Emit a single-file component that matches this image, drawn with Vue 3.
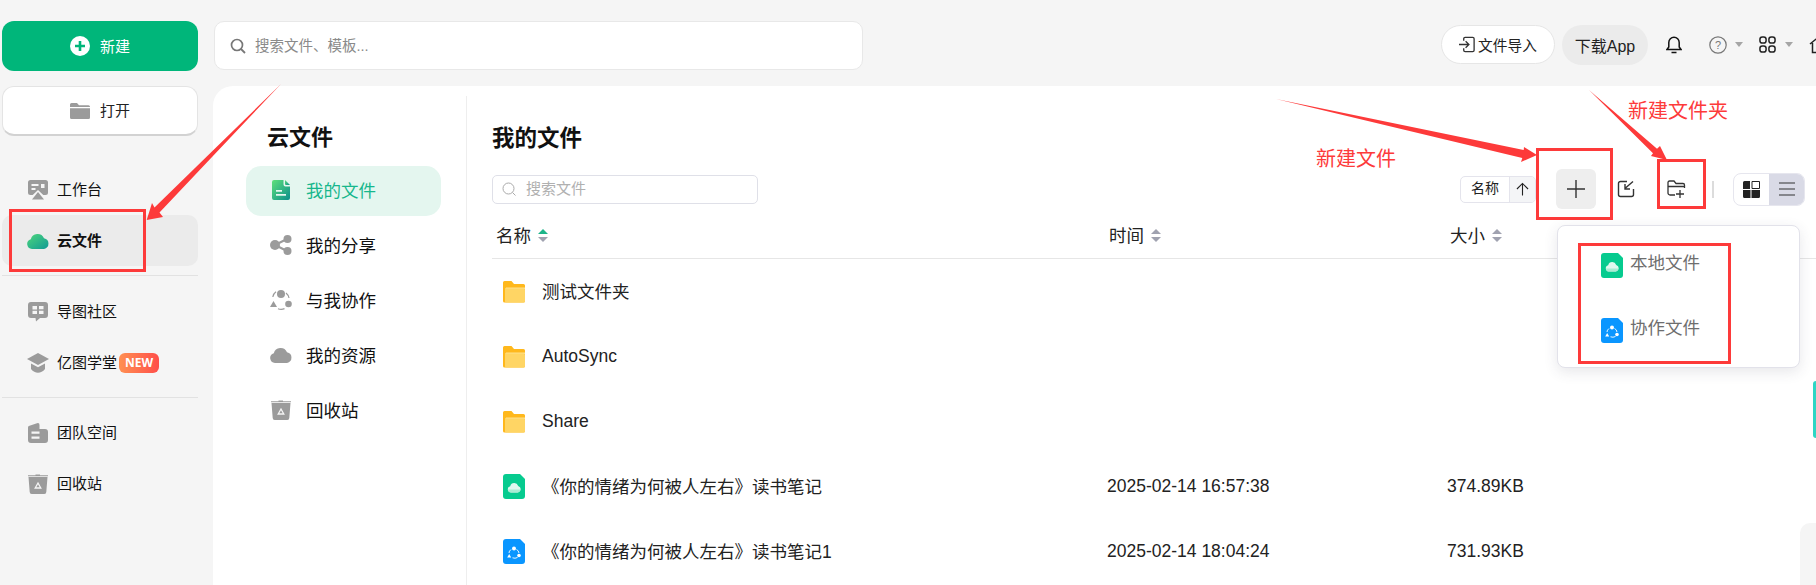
<script setup>
const navA = [{ icon: 'i-work', text: '工作台' }, { icon: 'i-cloud', text: '云文件', active: true }]
const navB = [{ icon: 'i-community', text: '导图社区' }, { icon: 'i-school', text: '亿图学堂', badge: 'NEW' }]
const navC = [{ icon: 'i-team', text: '团队空间' }, { icon: 'i-trash', text: '回收站' }]
const subNav = [
  { icon: 'i-mydoc', text: '我的文件', active: true },
  { icon: 'i-share', text: '我的分享' },
  { icon: 'i-collab', text: '与我协作' },
  { icon: 'i-res', text: '我的资源' },
  { icon: 'i-trash', text: '回收站' }
]
const files = [
  { icon: 'i-folder', name: '测试文件夹', time: '', size: '', cjk: true },
  { icon: 'i-folder', name: 'AutoSync', time: '', size: '' },
  { icon: 'i-folder', name: 'Share', time: '', size: '' },
  { icon: 'i-doc-green', name: '《你的情绪为何被人左右》读书笔记', time: '2025-02-14 16:57:38', size: '374.89KB', cjk: true },
  { icon: 'i-doc-blue', name: '《你的情绪为何被人左右》读书笔记1', time: '2025-02-14 18:04:24', size: '731.93KB', cjk: true }
]
const cols = [
  { label: '名称', on: true },
  { label: '时间' },
  { label: '大小' }
]
const menu = [
  { icon: 'i-doc-green', text: '本地文件' },
  { icon: 'i-doc-blue', text: '协作文件' }
]
</script>

<template>
  <div class="app">
    <svg class="defs" width="0" height="0">
      <defs>
        <linearGradient id="gCloud" x1="0" y1="0" x2="1" y2="1">
          <stop offset="0" stop-color="#4fd67c" /><stop offset="1" stop-color="#0f9a94" />
        </linearGradient>
        <linearGradient id="gDoc" x1="0" y1="0" x2="1" y2="1">
          <stop offset="0" stop-color="#5ee07a" /><stop offset="1" stop-color="#0b8f8c" />
        </linearGradient>
        <symbol id="i-work" viewBox="0 0 20 20">
          <path fill="#9b9b9b" d="M2.500 0h15A2.500 2.500 0 0 1 20 2.500v10a2.500 2.500 0 0 1-2.500 2.500h-2.200L10 10 4.700 15H2.500A2.500 2.500 0 0 1 0 12.500v-10A2.500 2.500 0 0 1 2.500 0z" />
          <path fill="#f5f5f5" d="M3.500 4h7v2h-7zM3.500 8h4v2h-4zM13 4h3.500v4H13z" />
          <path fill="#9b9b9b" d="M10 12l6 7.500H4z" />
        </symbol>
        <symbol id="i-cloud" viewBox="0 0 22 16">
          <path fill="url(#gCloud)" d="M5 16a5 5 0 0 1-1.200-9.800A7 7 0 0 1 17 5.200 5.500 5.500 0 0 1 17 16z" />
        </symbol>
        <symbol id="i-community" viewBox="0 0 20 20">
          <path fill="#9b9b9b" d="M3 0h14a3 3 0 0 1 3 3v10a3 3 0 0 1-3 3h-5l-4 3.500-.5-3.500H3a3 3 0 0 1-3-3V3a3 3 0 0 1 3-3z" />
          <path fill="#f5f5f5" d="M4.500 4h4.500v8H4.500zM11 4h4.500v3.200H11zM11 8.800h4.500V12H11z" />
          <path fill="#9b9b9b" d="M3.500 7.500h6V8.800h-6z" />
        </symbol>
        <symbol id="i-school" viewBox="0 0 22 20">
          <path fill="#9b9b9b" d="M11 0l11 6-11 6L0 6z" />
          <path fill="#9b9b9b" d="M4 10.500l7 3.800 7-3.800v5.500c-2 2.500-4.500 3.800-7 3.800S6 18.500 4 16z" />
        </symbol>
        <symbol id="i-team" viewBox="0 0 20 20">
          <path fill="#9b9b9b" d="M0 4.500Q0 3 1.500 2.700L9 .2Q11.500-.5 11.500 2V6H17a3 3 0 0 1 3 3v8a3 3 0 0 1-3 3H3a3 3 0 0 1-3-3z" />
          <path fill="#f5f5f5" d="M3.500 8.500h8v2.200h-8zM3.500 13.500h8v2.200h-8z" />
        </symbol>
        <symbol id="i-trash" viewBox="0 0 20 20">
          <path fill="#9b9b9b" d="M0 1.200h7.500V.5h4.500v.7h8V2.300H0z" />
          <path fill="#9b9b9b" d="M.5 3h19l-1.200 15a2 2 0 0 1-2 2H3.700a2 2 0 0 1-2-2z" />
          <path fill="none" stroke="#f5f5f5" stroke-width="1.300" d="M10 9l2.800 5H7.200z" />
        </symbol>
        <symbol id="i-mydoc" viewBox="0 0 18 20">
          <path fill="url(#gDoc)" d="M2 0h9.500v4.500a2 2 0 0 0 2 2H18V18a2 2 0 0 1-2 2H2a2 2 0 0 1-2-2V2a2 2 0 0 1 2-2z" />
          <path fill="url(#gDoc)" d="M13 0l5 5h-4a1 1 0 0 1-1-1z" />
          <path fill="#e4f6ef" d="M4 10h6v1.800H4zM4 14h10v1.800H4z" />
        </symbol>
        <symbol id="i-share" viewBox="0 0 22 20">
          <path stroke="#9b9b9b" stroke-width="2" d="M5 10l12-6M5 10l12 6" />
          <circle cx="5" cy="10" r="5" fill="#9b9b9b" />
          <circle cx="17.500" cy="4" r="4" fill="#9b9b9b" />
          <circle cx="17.500" cy="16" r="4" fill="#9b9b9b" />
        </symbol>
        <symbol id="i-collab" viewBox="0 0 22 20">
          <circle cx="11" cy="4" r="4" fill="#9b9b9b" />
          <circle cx="18.500" cy="14" r="3.300" fill="#9b9b9b" />
          <path fill="#9b9b9b" d="M0 17l3.500-6 3.500 6z" />
          <path fill="none" stroke="#9b9b9b" stroke-width="1.200" d="M6 1.800Q3 4 2.800 7M8 18.800q3.500 1.200 6.500-.2M19 8q-.5-3-3-5" />
        </symbol>
        <symbol id="i-res" viewBox="0 0 22 16">
          <path fill="#9b9b9b" d="M5 16a5 5 0 0 1-1.200-9.800A7 7 0 0 1 17 5.200 5.500 5.500 0 0 1 17 16z" />
        </symbol>
        <symbol id="i-folder" viewBox="0 0 22 22">
          <path fill="#ffb81c" d="M1.500 0h7L11 3h9.500A1.500 1.500 0 0 1 22 4.500V20a1.500 1.500 0 0 1-1.500 1.500h-19A1.500 1.500 0 0 1 0 20V1.500A1.500 1.500 0 0 1 1.500 0z" />
          <path fill="#ffe08a" d="M3 6.500h19V8H2z" />
          <path fill="#ffd564" d="M3 7.500h17.500A1.500 1.500 0 0 1 22 9v11a1.500 1.500 0 0 1-1.500 1.500H3A1.500 1.500 0 0 1 2 20V8.500a1 1 0 0 1 1-1z" />
        </symbol>
        <symbol id="i-doc-green" viewBox="0 0 22 25">
          <path fill="#06cb8f" d="M3 0h14L22 5V22a3 3 0 0 1-3 3H3a3 3 0 0 1-3-3V3a3 3 0 0 1 3-3z" />
          <path fill="#dff8ef" d="M8 18.500a3.200 3.200 0 0 1-.8-6.300 4.200 4.200 0 0 1 8-.3 3.400 3.400 0 0 1-.2 6.600z" />
          <path fill="#a9ecd4" d="M5 15.500h12.500a3.400 3.400 0 0 1-3.500 3H8a3.200 3.200 0 0 1-3-3z" />
        </symbol>
        <symbol id="i-doc-blue" viewBox="0 0 22 25">
          <path fill="#0a96ff" d="M3 0h14L22 5V22a3 3 0 0 1-3 3H3a3 3 0 0 1-3-3V3a3 3 0 0 1 3-3z" />
          <circle cx="11" cy="9.500" r="2" fill="#fff" />
          <circle cx="16" cy="16.500" r="1.800" fill="#fff" />
          <path fill="#fff" d="M4.200 18.500l2-3.500 2 3.500z" />
          <path fill="none" stroke="#fff" stroke-width=".9" d="M8 10.500Q6 12 6 14M9.500 18.800q2.500 1 5-.3M16 14q-.3-2.500-2.500-3.500" />
        </symbol>
      </defs>
    </svg>

    <aside class="side">
      <button class="big big-new">
        <svg class="big-ico" viewBox="0 0 20 20"><circle cx="10" cy="10" r="10" fill="#fff" /><path d="M10 5v10M5 10h10" stroke="#00b67a" stroke-width="2.600" /></svg>
        <span>新建</span>
      </button>
      <button class="big big-open">
        <svg class="big-ico" viewBox="0 0 20 16"><path fill="#9b9b9b" d="M1.500 0h5.500l2 2.200h9.500A1.500 1.500 0 0 1 20 3.700V4H0V1.500A1.500 1.500 0 0 1 1.500 0zM0 5.200h20v9.300a1.500 1.500 0 0 1-1.500 1.500h-17A1.500 1.500 0 0 1 0 14.500z" /></svg>
        <span>打开</span>
      </button>
      <nav class="nav nav-a">
        <a v-for="n in navA" :key="n.text" class="nav-item" :class="{ on: n.active }">
          <svg class="nav-ico"><use :href="'#' + n.icon" /></svg><span>{{ n.text }}</span>
        </a>
      </nav>
      <hr class="rule rule-a" />
      <nav class="nav">
        <a v-for="n in navB" :key="n.text" class="nav-item">
          <svg class="nav-ico"><use :href="'#' + n.icon" /></svg><span>{{ n.text }}</span>
          <em v-if="n.badge" class="badge">{{ n.badge }}</em>
        </a>
      </nav>
      <hr class="rule rule-b" />
      <nav class="nav">
        <a v-for="n in navC" :key="n.text" class="nav-item">
          <svg class="nav-ico"><use :href="'#' + n.icon" /></svg><span>{{ n.text }}</span>
        </a>
      </nav>
    </aside>

    <div class="right">
      <header class="top">
        <div class="top-search">
          <svg class="ts-ico" viewBox="0 0 16 16"><circle cx="7" cy="7" r="5.500" fill="none" stroke="#777" stroke-width="1.700" /><path d="M11 11l4 4" stroke="#777" stroke-width="1.800" /></svg>
          <span>搜索文件、模板...</span>
        </div>
        <div class="top-tools">
          <button class="pill pill-w">
            <svg class="pill-ico" viewBox="0 0 18 18"><path fill="none" stroke="#333" stroke-width="1.400" d="M5 5V3a1.500 1.500 0 0 1 1.500-1.500h8A1.500 1.500 0 0 1 16 3v12a1.500 1.500 0 0 1-1.500 1.500h-8A1.500 1.500 0 0 1 5 15v-2M0 9h10M7 5.500L10.500 9 7 12.500" /></svg>
            <span>文件导入</span>
          </button>
          <button class="pill pill-g">下载App</button>
          <svg class="bell" viewBox="0 0 16 18"><path fill="none" stroke="#111" stroke-width="1.500" d="M1 13.500h14l-1.800-2.500V6.500a5.200 5.200 0 0 0-10.400 0V11zM5.500 16.500h5" /></svg>
          <svg class="help" viewBox="0 0 18 18"><circle cx="9" cy="9" r="8.200" fill="none" stroke="#777" stroke-width="1.200" /><text x="9" y="13" text-anchor="middle" font-size="11" fill="#777" font-family="Liberation Sans">?</text></svg>
          <i class="caret caret-h"></i>
          <svg class="grid" viewBox="0 0 18 18"><g fill="none" stroke="#222" stroke-width="1.600"><rect x="1" y="1" width="6.500" height="6.500" rx="2.500" /><rect x="10.500" y="1" width="6.500" height="6.500" rx="2.500" /><rect x="1" y="10.500" width="6.500" height="6.500" rx="2.500" /><rect x="10.500" y="10.500" width="6.500" height="6.500" rx="2.500" /></g></svg>
          <i class="caret caret-g"></i>
          <svg class="home" viewBox="0 0 18 18"><path fill="none" stroke="#222" stroke-width="1.500" d="M1 8l8-6.500L17 8M3.500 7v9.500h11V7" /></svg>
        </div>
      </header>

      <section class="panel">
        <div class="sub">
          <div class="sub-title">云文件</div>
          <a v-for="s in subNav" :key="s.text" class="sub-item" :class="{ on: s.active }">
            <svg class="sub-ico"><use :href="'#' + s.icon" /></svg><span>{{ s.text }}</span>
          </a>
        </div>
        <div class="main">
          <h1 class="title">我的文件</h1>
          <div class="bar">
            <div class="f-search">
              <svg class="fs-ico" viewBox="0 0 14 14"><circle cx="6.500" cy="6.500" r="5.500" fill="none" stroke="#aaa" stroke-width="1" /><path d="M10.500 10.500l3 3" stroke="#aaa" /></svg>
              <span>搜索文件</span>
            </div>
            <div class="bar-tools">
              <div class="sort">
                <span class="sort-l">名称</span>
                <span class="sort-r"><svg class="up" viewBox="0 0 14 14"><path fill="none" stroke="#222" stroke-width="1.200" d="M7 14V1M1 7l6-6 6 6" /></svg></span>
              </div>
              <button class="plus"><svg viewBox="0 0 18 18"><path d="M9 0v18M0 9h18" stroke="#333" stroke-width="1.400" /></svg></button>
              <svg class="chk" viewBox="0 0 18 18"><path fill="none" stroke="#333" stroke-width="1.400" d="M10 1.500H3.500a2 2 0 0 0-2 2v11a2 2 0 0 0 2 2h11a2 2 0 0 0 2-2V9M16 1.500l-7.500 6.500M8 4v5h5" /></svg>
              <svg class="fld" viewBox="0 0 20 18"><path fill="none" stroke="#333" stroke-width="1.300" d="M8 15H3a2 2 0 0 1-2-2V2.500A1.500 1.500 0 0 1 2.500 1h4.500l2 2.500h7A1.500 1.500 0 0 1 17.500 5v3M1 6.500h16M13 10v8M9 14h8" /></svg>
              <i class="sep"></i>
              <div class="toggle">
                <span class="tg-a"><svg viewBox="0 0 17 17"><path fill="#222" d="M1.500 0h5.500v8H0V1.500A1.500 1.500 0 0 1 1.500 0zM0 9h7.500v8H1.500A1.500 1.500 0 0 1 0 15.500zM8.500 9H17v6.500a1.500 1.500 0 0 1-1.500 1.500h-7z" /><path fill="none" stroke="#222" d="M9 .5h7.500V7.500H9z" /></svg></span>
                <span class="tg-b"><svg viewBox="0 0 16 14"><path d="M0 1h16M0 7h16M0 13h16" stroke="#333" stroke-width="1.200" /></svg></span>
              </div>
            </div>
          </div>
          <div class="thead">
            <div v-for="c in cols" :key="c.label" class="th">
              <span>{{ c.label }}</span>
              <span class="tris"><i class="tri-u" :class="{ green: c.on }"></i><i class="tri-d"></i></span>
            </div>
          </div>
          <div v-for="f in files" :key="f.name" class="row">
            <div class="cell-name">
              <svg class="file-ico" :class="{ 'file-doc': f.icon !== 'i-folder' }"><use :href="'#' + f.icon" /></svg>
              <span :class="{ lift: f.cjk }">{{ f.name }}</span>
            </div>
            <div>{{ f.time }}</div>
            <div>{{ f.size }}</div>
          </div>
        </div>
      </section>
    </div>

    <div class="menu">
      <div v-for="m in menu" :key="m.text" class="menu-item">
        <svg class="menu-ico"><use :href="'#' + m.icon" /></svg><span>{{ m.text }}</span>
      </div>
    </div>

    <i class="edge-teal"></i>
    <i class="edge-gray"></i>

    <svg class="marks" viewBox="0 0 1816 585">
      <g fill="none" stroke="#fd3a3a" stroke-width="3">
        <rect x="10.500" y="210.500" width="134" height="60" />
        <rect x="1537.500" y="149.500" width="74" height="69" />
        <rect x="1658.500" y="160.500" width="46" height="47" />
        <rect x="1579.500" y="244.500" width="150" height="118" />
      </g>
      <g fill="#fd3a3a">
        <polygon points="281,84 159.500,212.500 163,217 146.700,220 152,203 154.500,207.500" />
        <polygon points="1276,99 1523.700,150 1524,147 1537,155 1521,162 1522.300,158" />
        <polygon points="1589,90 1657,148.800 1660,146 1667,160 1651,156 1653,153.200" />
      </g>
    </svg>
    <span class="note note-a">新建文件</span>
    <span class="note note-b">新建文件夹</span>
  </div>
</template>

<style>
html, body { margin: 0; background: #f5f5f5; }
</style>

<style scoped>
.app {
  position: relative; width: 1816px; height: 585px; overflow: hidden; display: flex;
  background: #f5f5f5; color: #111;
  font-family: "Liberation Sans", "Noto Sans CJK SC", sans-serif;
}
.defs { position: absolute; }
button { font-family: inherit; padding: 0; }
a { display: flex; }
i, em { font-style: normal; display: block; }

.side { width: 213px; flex: none; padding: 21px 0 0 2px; box-sizing: border-box; }
.big {
  width: 196px; height: 50px; display: flex; align-items: center; justify-content: center; gap: 10px;
  border-radius: 12px; font-size: 15px; box-sizing: border-box; border: 0;
}
.big span { margin-bottom: 2px; }
.big-new { background: #00b67a; color: #fff; }
.big-open { margin-top: 15px; background: #fff; border: 1px solid #e4e4e4; border-bottom: 2px solid #d2d2d2; color: #222; }
.big-ico { width: 20px; height: 20px; }
.nav { width: 196px; }
.nav-a { margin-top: 28px; }
.nav-item { height: 51px; align-items: center; padding-left: 25px; font-size: 15px; border-radius: 10px; gap: 8px; }
.nav-item > span { margin-bottom: 2px; }
.nav-item.on { background: #ebebeb; font-weight: 700; }
.nav-ico { width: 22px; height: 20px; flex: none; }
.badge {
  margin-left: -6px; width: 40px; height: 20px; line-height: 20px; text-align: center; border-radius: 6px;
  background: linear-gradient(90deg, #ff9052, #ff4f4a); color: #fff; font-size: 12px; font-weight: 700;
  font-family: "Noto Sans", sans-serif;
}
.rule { width: 196px; height: 1px; border: 0; background: #e2e2e2; }
.rule-a { margin: 9px 0 10px; }
.rule-b { margin: 9px 0; }

.right { flex: 1; min-width: 0; display: flex; flex-direction: column; }
.top { height: 86px; flex: none; box-sizing: border-box; padding: 21px 0 0 1px; display: flex; }
.top-search {
  width: 649px; flex: none; height: 49px; box-sizing: border-box; background: #fff; border: 1px solid #e8e8e8; border-radius: 10px;
  display: flex; align-items: center; padding-left: 15px; gap: 9px; color: #8a8a8a; font-size: 14.500px;
}
.top-search span { margin-bottom: 2px; }
.ts-ico { width: 16px; height: 16px; }
.top-tools { flex: 1; height: 49px; display: flex; align-items: center; padding-left: 578px; margin-top: -1px; }
.pill { height: 39px; border-radius: 20px; display: flex; align-items: center; justify-content: center; font-size: 14.700px; color: #222; box-sizing: border-box; flex: none; }
.pill-w { width: 114px; background: #fff; border: 1px solid #e6e6e6; gap: 2px; }
.pill-ico { width: 17px; height: 17px; }
.pill-g { width: 86px; height: 40px; margin-left: 7px; background: #ebebeb; border: 0; font-size: 16px; }
.bell { width: 16px; height: 18px; margin-left: 18px; flex: none; }
.help { width: 18px; height: 18px; margin-left: 27px; flex: none; }
.caret { width: 0; height: 0; border: 4px solid transparent; border-top: 5px solid #a5a5a5; border-bottom: 0; flex: none; }
.caret-h { margin-left: 8px; }
.grid { width: 17px; height: 17px; margin-left: 16px; flex: none; }
.caret-g { margin-left: 9px; }
.home { width: 18px; height: 18px; margin-left: 16px; flex: none; }

.panel { flex: 1; min-height: 0; background: #fff; border-top-left-radius: 20px; display: flex; }
.sub { width: 254px; flex: none; box-sizing: border-box; margin-top: 10px; padding: 25px 25px 0 33px; border-right: 1px solid #eee; }
.sub-title { font-size: 22px; font-weight: 700; line-height: 34px; padding-left: 21px; margin-bottom: 11px; }
.sub-item { width: 195px; height: 50px; margin-bottom: 5px; align-items: center; border-radius: 15px; font-size: 17.500px; padding-left: 24px; box-sizing: border-box; gap: 14px; }
.sub-item span { margin-bottom: 4px; }
.sub-item.on { background: #e4f6ef; color: #17b78c; }
.sub-ico { width: 22px; height: 20px; flex: none; margin-bottom: 2px; }

.main { flex: 1; min-width: 0; padding-left: 25px; position: relative; }
.title { margin: 0 0 13px; padding-top: 36px; font-size: 22.500px; font-weight: 700; line-height: 34px; }
.bar { height: 40px; display: flex; align-items: center; justify-content: space-between; padding-right: 11px; }
.f-search {
  width: 266px; height: 29px; box-sizing: border-box; border: 1px solid #dfe0e8; border-radius: 5px;
  display: flex; align-items: center; padding-left: 9px; gap: 10px; color: #b0b0b0; font-size: 15px;
}
.f-search span { margin-bottom: 3px; }
.fs-ico { width: 14px; height: 14px; }
.bar-tools { display: flex; align-items: center; }
.sort { width: 76px; height: 27px; box-sizing: border-box; border: 1px solid #e4e4ec; border-radius: 5px; display: flex; overflow: hidden; font-size: 14px; color: #222; }
.sort-l { width: 48px; text-align: center; line-height: 23px; border-right: 1px solid #e4e4ec; }
.sort-r { flex: 1; background: #f4f5f7; display: flex; align-items: center; justify-content: center; }
.up { width: 13px; height: 14px; }
.plus { width: 40px; height: 40px; margin-left: 20px; border: 0; border-radius: 6px; background: #eee; display: flex; align-items: center; justify-content: center; }
.plus svg { width: 18px; height: 18px; }
.chk { width: 18px; height: 18px; margin-left: 21px; }
.fld { width: 20px; height: 18px; margin-left: 32px; }
.sep { width: 2px; height: 17px; margin-left: 25px; background: #dcdcdc; }
.toggle { width: 72px; height: 33px; margin-left: 19px; box-sizing: border-box; border: 1px solid #e6e6ee; border-radius: 8px; display: flex; overflow: hidden; }
.tg-a, .tg-b { flex: 1; display: flex; align-items: center; justify-content: center; }
.tg-a svg { width: 17px; height: 17px; }
.tg-b { background: #d9dae6; }
.tg-b svg { width: 16px; height: 14px; }

.thead, .row { display: grid; }
.thead {
  grid-template-columns: 613px 341px 1fr; height: 46px; margin-top: 3px; padding-left: 4px;
  align-items: center; border-bottom: 1px solid #e6e6e6; font-size: 17.500px; color: #222;
}
.th { display: flex; align-items: center; gap: 7px; }
.th > span:first-child { margin-bottom: 2px; }
.tris { display: flex; flex-direction: column; gap: 3px; }
.tri-u { width: 0; height: 0; border: 5px solid transparent; border-bottom: 5px solid #a0a2b0; border-top: 0; }
.tri-u.green { border-bottom-color: #1db589; }
.tri-d { width: 0; height: 0; border: 5px solid transparent; border-top: 5px solid #a0a2b0; border-bottom: 0; }
.row { grid-template-columns: 615px 340px 1fr; height: 65px; align-items: center; font-size: 17.500px; color: #222; }
.cell-name { display: flex; align-items: center; padding-left: 11px; gap: 17px; }
.lift { margin-bottom: 2px; }
.file-ico { width: 22px; height: 22px; flex: none; }
.file-doc { height: 25px; }

.menu {
  position: absolute; left: 1557px; top: 225px; width: 243px; height: 143px; box-sizing: border-box;
  background: #fff; border: 1px solid #e2e2ea; border-radius: 8px; box-shadow: 0 4px 14px rgba(60, 60, 80, .12);
  padding-top: 27px; padding-left: 43px;
}
.menu-item { height: 25px; display: flex; align-items: center; gap: 7px; font-size: 17.500px; color: #6e6e6e; margin-bottom: 40px; }
.menu-item span { margin-bottom: 8px; }
.menu-ico { width: 22px; height: 25px; flex: none; }

.edge-teal { position: absolute; right: 0; top: 381px; width: 3px; height: 57px; background: #2fd6c4; border-radius: 3px 0 0 3px; }
.edge-gray { position: absolute; right: 0; top: 523px; width: 16px; height: 62px; background: #f5f5f5; border-radius: 10px 0 0 0; }
.marks { position: absolute; left: 0; top: 0; width: 1816px; height: 585px; pointer-events: none; }
.note { position: absolute; color: #fd3a3a; font-size: 20px; line-height: 26px; }
.note-a { left: 1316px; top: 146px; }
.note-b { left: 1628px; top: 98px; }
</style>
